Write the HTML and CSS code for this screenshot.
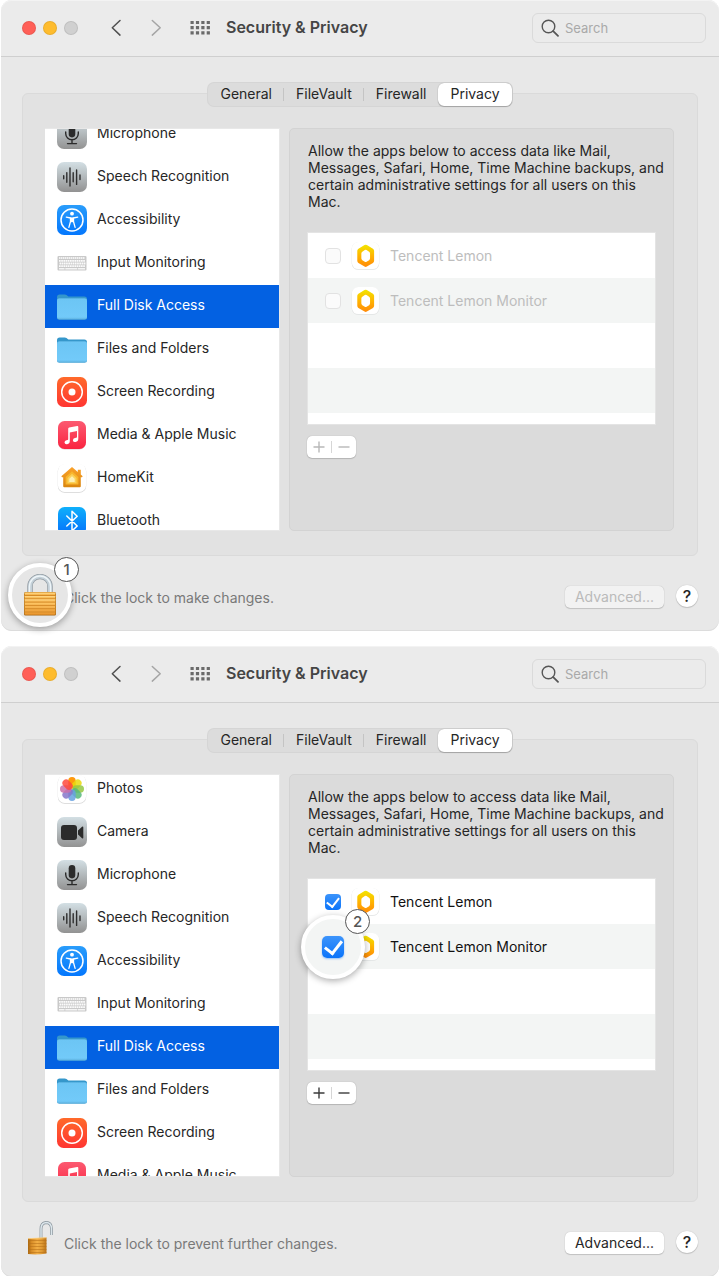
FILE: index.html
```html
<!DOCTYPE html>
<html lang="en">
<head>
<meta charset="utf-8">
<meta name="viewport" content="width=device-width, initial-scale=1">
<title>Security &amp; Privacy</title>
<link rel="stylesheet" href="styles.css">
</head>
<body>
<svg class="sprite" aria-hidden="true">
  <defs>
    <linearGradient id="g-gray" x1="0" y1="0" x2="0" y2="1"><stop offset="0" stop-color="#d3dfe4"/><stop offset="1" stop-color="#929292"/></linearGradient>
    <linearGradient id="g-blue" x1="0" y1="0" x2="0" y2="1"><stop offset="0" stop-color="#2a9dfb"/><stop offset="1" stop-color="#0477fd"/></linearGradient>
    <linearGradient id="g-bt" x1="0" y1="0" x2="0" y2="1"><stop offset="0" stop-color="#0fb0fb"/><stop offset="1" stop-color="#0570fb"/></linearGradient>
    <linearGradient id="g-red" x1="0" y1="0" x2="0" y2="1"><stop offset="0" stop-color="#ff6a2a"/><stop offset="1" stop-color="#ff3532"/></linearGradient>
    <linearGradient id="g-music" x1="0" y1="0" x2="0" y2="1"><stop offset="0" stop-color="#fc5a71"/><stop offset="1" stop-color="#fa2440"/></linearGradient>
    <linearGradient id="g-folder" x1="0" y1="0" x2="0" y2="1"><stop offset="0" stop-color="#6cc5f4"/><stop offset="0.9" stop-color="#72caf9"/><stop offset="1" stop-color="#5fb3e0"/></linearGradient>
    <linearGradient id="g-home" x1="0" y1="0" x2="0" y2="1"><stop offset="0" stop-color="#fba22a"/><stop offset="1" stop-color="#d9860f"/></linearGradient>
    <linearGradient id="g-lemon" x1="0" y1="0" x2="0" y2="1"><stop offset="0" stop-color="#f2e500"/><stop offset="0.5" stop-color="#ffb400"/><stop offset="1" stop-color="#ff8a0a"/></linearGradient>
    <linearGradient id="g-brass" x1="0" y1="0" x2="0" y2="1"><stop offset="0" stop-color="#f5b64f"/><stop offset="0.5" stop-color="#fcc260"/><stop offset="1" stop-color="#e9952d"/></linearGradient>
    <linearGradient id="g-brass-side" x1="0" y1="0" x2="1" y2="0"><stop offset="0" stop-color="#a8670f"/><stop offset="0.2" stop-color="#d98e28"/><stop offset="0.5" stop-color="#f2ae45"/><stop offset="0.75" stop-color="#e09a33"/><stop offset="1" stop-color="#b87118"/></linearGradient>
  </defs>
  <symbol id="microphone" viewBox="0 0 30 30">
    <rect width="30" height="30" rx="7" fill="url(#g-gray)"/>
    <rect x="11.7" y="5" width="6.6" height="13.4" rx="3.3" fill="#2b2b2b"/>
    <path d="M8.7 13v1.5a6.3 6.3 0 0 0 12.6 0V13M15 21v3.4M10.5 24.6h9" fill="none" stroke="#2b2b2b" stroke-width="1.4" stroke-linecap="round"/>
  </symbol>
  <symbol id="camera" viewBox="0 0 30 30">
    <rect width="30" height="30" rx="7" fill="url(#g-gray)"/>
    <rect x="4" y="8" width="16" height="15" rx="3" fill="#2b2b2b"/>
    <path d="M21 13.500 25 9.800q1.300-.8 1.300.6v10.200q0 1.400-1.300.6l-4-3.700z" fill="#2b2b2b"/>
  </symbol>
  <symbol id="speech" viewBox="0 0 30 30">
    <rect width="30" height="30" rx="7" fill="url(#g-gray)"/>
    <path d="M6.700 13.700v3M9.800 10.600v9.600M13 6v18M16.200 10.800v9M19.600 8v14.400M23 13v4.500" stroke="#2f2f2f" stroke-width="1.4" stroke-linecap="round"/>
  </symbol>
  <symbol id="accessibility" viewBox="0 0 30 30">
    <rect width="30" height="30" rx="7" fill="url(#g-blue)"/>
    <circle cx="15" cy="15" r="11" fill="none" stroke="#fff" stroke-width="1.500"/>
    <circle cx="15" cy="8.700" r="1.900" fill="#fff"/>
    <path d="M9.300 12.200 13.500 13v3.500l-1.600 5.800M20.700 12.200 16.500 13v3.500l1.600 5.800" fill="none" stroke="#fff" stroke-width="1.300" stroke-linecap="round" stroke-linejoin="round"/>
    <path d="M13.200 12.400h3.600v4.800h-3.600z" fill="#fff"/>
  </symbol>
  <symbol id="keyboard" viewBox="0 0 30 30">
    <rect x=".5" y="8" width="29" height="14.500" rx="1" fill="#c9c9c9"/>
    <path d="M2 10h26" stroke="#fff" stroke-width="1.400" stroke-dasharray="1.500 .5"/>
    <path d="M2 12.800h26M2 18.200h26" stroke="#fbfbfb" stroke-width="1.800" stroke-dasharray="1.700 .5"/>
    <path d="M2.500 15.500h26" stroke="#fbfbfb" stroke-width="1.800" stroke-dasharray="1.700 .5"/>
    <path d="M2 20.800h5.500M8.300 20.800h12M21 20.800h7" stroke="#f4f4f4" stroke-width="1.600"/>
  </symbol>
  <symbol id="folder" viewBox="0 0 30 30">
    <path d="M0 6.200Q0 3.500 2.700 3.500h5.100q1 0 1.700.6l1.200.9q.7.500 1.600.5h15q2.700 0 2.700 2.500v4H0z" fill="#3597cb"/>
    <rect x="0" y="7.200" width="30" height="21.600" rx="2.400" fill="#4ea6d6"/>
    <rect x="0" y="7.400" width="30" height="20.800" rx="2.200" fill="url(#g-folder)"/>
  </symbol>
  <symbol id="record" viewBox="0 0 30 30">
    <rect width="30" height="30" rx="6.500" fill="url(#g-red)"/>
    <circle cx="15" cy="15" r="10.300" fill="none" stroke="#fff" stroke-width="1.500"/>
    <circle cx="15" cy="15" r="3.500" fill="#fff"/>
  </symbol>
  <symbol id="music" viewBox="0 0 30 30">
    <rect x="1" y="1.800" width="28" height="27.600" rx="6.500" fill="#e0c8cc"/>
    <rect x="1" y="1" width="28" height="28" rx="6.500" fill="url(#g-music)"/>
    <path d="M11.200 8.800q0-1 .9-1.200l8.100-1.600q1.100-.2 1.100.9v11.900q0 2.700-2.700 3.200-2.400.4-2.700-1.600 0-1.800 2-2.300l1.300-.3q.8-.2.800-1v-5.700l-7.200 1.500v8.500q0 2.700-2.700 3.100-2.300.3-2.600-1.600 0-1.800 2-2.300l1.100-.3q.6-.2.600-1z" fill="#fff"/>
  </symbol>
  <symbol id="home" viewBox="0 0 30 30">
    <rect x=".8" y="1.400" width="28.400" height="28.400" rx="6.800" fill="#d4d4d4"/>
    <rect x="1" y="1" width="28" height="28" rx="6.500" fill="#fff"/>
    <path d="M15 3.900 20.800 9V6.700h3v4.900l1.600 1.500q.5 1-.5 1.100h-1.100v9q0 1-1 1h-15.600q-1 0-1-1v-9H5.100q-1-.1-.5-1.100z" fill="url(#g-home)"/>
    <path d="m15 8.200 6.400 5.800v7.500H8.600V14z" fill="#f8b52d"/>
    <path d="m15 10.700 4.500 4.200v5.300h-9v-5.300z" fill="#fad15c"/>
    <path d="m15 13.200 2.700 2.500v3.300h-5.400v-3.300z" fill="#fdf0b5"/>
  </symbol>
  <symbol id="bluetooth" viewBox="0 0 30 30">
    <rect x="1" y="1" width="28" height="28" rx="6.500" fill="url(#g-bt)"/>
    <path d="m9.800 10 10.400 10-5.200 4.900V5.300l5.200 4.900L9.800 20" fill="none" stroke="#fff" stroke-width="1.500" stroke-linejoin="round" stroke-linecap="round"/>
  </symbol>
  <symbol id="photos" viewBox="0 0 30 30">
    <rect x=".8" y="1.400" width="28.400" height="28.400" rx="6.800" fill="#d4d4d4"/>
    <rect x="1" y="1" width="28" height="28" rx="6.500" fill="#fff"/>
    <g opacity=".95">
      <rect x="11.300" y="3" width="7.400" height="11.500" rx="3.700" fill="#ff9500"/>
      <rect x="11.300" y="3" width="7.400" height="11.500" rx="3.700" fill="#e8d800" fill-opacity=".85" transform="rotate(45 15 15)"/>
      <rect x="11.300" y="3" width="7.400" height="11.500" rx="3.700" fill="#8fc63a" fill-opacity=".85" transform="rotate(90 15 15)"/>
      <rect x="11.300" y="3" width="7.400" height="11.500" rx="3.700" fill="#4fb573" fill-opacity=".85" transform="rotate(135 15 15)"/>
      <rect x="11.300" y="3" width="7.400" height="11.500" rx="3.700" fill="#5e9ce0" fill-opacity=".85" transform="rotate(180 15 15)"/>
      <rect x="11.300" y="3" width="7.400" height="11.500" rx="3.700" fill="#8070c8" fill-opacity=".85" transform="rotate(225 15 15)"/>
      <rect x="11.300" y="3" width="7.400" height="11.500" rx="3.700" fill="#c868a6" fill-opacity=".85" transform="rotate(270 15 15)"/>
      <rect x="11.300" y="3" width="7.400" height="11.500" rx="3.700" fill="#ff4033" fill-opacity=".85" transform="rotate(315 15 15)"/>
    </g>
  </symbol>
  <symbol id="lemon" viewBox="0 0 30 30">
    <rect x=".7" y="1.200" width="28.600" height="28.600" rx="6.800" fill="#e0e2e2"/>
    <rect x="1" y="1" width="28" height="28" rx="6.500" fill="#fff"/>
    <path fill-rule="evenodd" d="M14 4.200q1.200-.8 2.400 0l6.300 3.800q1.200.8 1.200 2.200v10.300q0 1.400-1.200 2.200l-6.300 3.800q-1.200.8-2.400 0L7.700 22.700q-1.200-.8-1.200-2.200V10.200Q6.500 8.800 7.700 8zM14.300 9.300l-2.600 1.700q-1 .7-1 1.900v5q0 1.200 1 1.900l2.600 1.700q.9.600 1.800 0l2.600-1.700q1-.7 1-1.900v-5q0-1.200-1-1.900l-2.600-1.700q-.9-.6-1.800 0z" fill="url(#g-lemon)"/>
  </symbol>
  <symbol id="lock" viewBox="0 0 34 42">
    <path d="M7 19V12.500a10 10 0 0 1 20 0V19" fill="none" stroke="#8f989f" stroke-width="5.400"/>
    <path d="M7 19V12.500a10 10 0 0 1 20 0V19" fill="none" stroke="#c4d0d8" stroke-width="4"/>
    <path d="M6.500 19V12.500a10.500 10.500 0 0 1 21 0V19" fill="none" stroke="#eef5f8" stroke-width="1.400"/>
    <rect x="1" y="18" width="32" height="23.500" rx="1.500" fill="#a5650f"/>
    <rect x="1.600" y="18.300" width="30.800" height="22.400" rx="1.200" fill="url(#g-brass)"/>
    <path d="M1.600 21.500h30.800M1.600 24.800h30.800M1.600 28.100h30.800M1.600 31.400h30.800M1.600 34.700h30.800M1.600 38h30.800" stroke="#d58a28" stroke-width="1"/>
    <path d="M1.600 19.300h30.800M1.600 22.600h30.800M1.600 25.900h30.800" stroke="#ffdc91" stroke-width=".8"/>
  </symbol>
  <symbol id="unlock" viewBox="0 0 26 34">
    <path d="M14 17V8q0-6 5-6.500 5.500 0 5.500 6.500v6" fill="none" stroke="#87929a" stroke-width="2.800"/>
    <path d="M14 17V8q0-6 5-6.500 5.500 0 5.500 6.500v6" fill="none" stroke="#dce6eb" stroke-width="1.500"/>
    <path d="M1 17.500 19.500 16.500v16q-9.500 1.500-18.500.5z" fill="url(#g-brass-side)"/>
    <path d="M1 19.500h18.500M1 22.500h18.500M1 25.500h18.500M1 28.500h18.500M1 31.500h18.500" stroke="#b87119" stroke-width=".8" opacity=".7"/>
    <path d="M1 17.700 19.500 16.700" stroke="#ffd384" stroke-width=".8"/>
  </symbol>
  <symbol id="back" viewBox="0 0 20 20"><path d="M14 2.500 6.300 9.800 14 17.100" fill="none" stroke="currentColor" stroke-width="1.500" stroke-linecap="round" stroke-linejoin="round"/></symbol>
  <symbol id="forward" viewBox="0 0 20 20"><path d="m6.300 2.500 7.900 7.300-7.900 7.300" fill="none" stroke="currentColor" stroke-width="1.500" stroke-linecap="round" stroke-linejoin="round"/></symbol>
  <symbol id="dots" viewBox="0 0 20 20"><path d="M.5 4.500h19.500M.5 9.700h19.500M.5 14.900h19.500" stroke="currentColor" stroke-width="3.200" stroke-dasharray="3.200 2.200"/></symbol>
  <symbol id="magnifier" viewBox="0 0 18 18"><circle cx="7.500" cy="7.500" r="6.300" fill="none" stroke="currentColor" stroke-width="1.400"/><path d="m12.200 12.200 4.800 4.600" stroke="currentColor" stroke-width="1.800" stroke-linecap="round"/></symbol>
  <symbol id="plus" viewBox="0 0 12 12"><path d="M6 .5v11M.5 6h11" stroke="currentColor" stroke-width="1.400"/></symbol>
  <symbol id="minus" viewBox="0 0 12 12"><path d="M.5 6h11" stroke="currentColor" stroke-width="1.400"/></symbol>
</svg>

<main class="stack">
  <section class="window" aria-label="Security and Privacy, locked">
    <header class="titlebar">
      <div class="lights"><button class="light close" aria-label="Close"></button><button class="light minimize" aria-label="Minimize"></button><button class="light zoom" aria-label="Zoom" disabled></button></div>
      <nav class="history">
        <button class="nav-button" aria-label="Back"><svg><use href="#back"/></svg></button>
        <button class="nav-button" aria-label="Forward" disabled><svg><use href="#forward"/></svg></button>
      </nav>
      <button class="nav-button show-all" aria-label="Show all"><svg><use href="#dots"/></svg></button>
      <h1 class="title">Security &amp; Privacy</h1>
      <label class="search"><svg><use href="#magnifier"/></svg><input type="search" placeholder="Search" aria-label="Search"></label>
    </header>
    <div class="content">
      <div class="tabs" role="tablist">
        <button class="tab" role="tab">General</button><button class="tab" role="tab">FileVault</button><button class="tab" role="tab">Firewall</button><button class="tab active" role="tab" aria-selected="true">Privacy</button>
      </div>
      <div class="panel">
        <div class="sidebar">
          <ul class="services from-microphone">
            <li class="service"><svg><use href="#microphone"/></svg><span>Microphone</span></li>
            <li class="service"><svg><use href="#speech"/></svg><span>Speech Recognition</span></li>
            <li class="service"><svg><use href="#accessibility"/></svg><span>Accessibility</span></li>
            <li class="service"><svg><use href="#keyboard"/></svg><span>Input Monitoring</span></li>
            <li class="service selected"><svg><use href="#folder"/></svg><span>Full Disk Access</span></li>
            <li class="service"><svg><use href="#folder"/></svg><span>Files and Folders</span></li>
            <li class="service"><svg><use href="#record"/></svg><span>Screen Recording</span></li>
            <li class="service"><svg><use href="#music"/></svg><span>Media &amp; Apple Music</span></li>
            <li class="service"><svg><use href="#home"/></svg><span>HomeKit</span></li>
            <li class="service"><svg><use href="#bluetooth"/></svg><span>Bluetooth</span></li>
          </ul>
        </div>
        <div class="detail">
          <p class="explain">Allow the apps below to access data like Mail,<br>Messages, Safari, Home, Time Machine backups, and<br>certain administrative settings for all users on this<br>Mac.</p>
          <div class="apps">
            <label class="app disabled"><span class="slot"><input class="check" type="checkbox" disabled></span><svg><use href="#lemon"/></svg><span>Tencent Lemon</span></label>
            <label class="app disabled"><span class="slot"><input class="check" type="checkbox" disabled></span><svg><use href="#lemon"/></svg><span>Tencent Lemon Monitor</span></label>
          </div>
          <div class="edit"><button aria-label="Add" disabled><svg><use href="#plus"/></svg></button><button aria-label="Remove" disabled><svg><use href="#minus"/></svg></button></div>
        </div>
      </div>
      <footer class="footer">
        <div class="lock-slot">
          <div class="callout">
            <button class="lock large" aria-label="Unlock"><svg><use href="#lock"/></svg></button>
            <span class="step">1</span>
          </div>
        </div>
        <span class="hint">Click the lock to make changes.</span>
        <button class="advanced" disabled>Advanced...</button>
        <button class="help" aria-label="Help">?</button>
      </footer>
    </div>
  </section>

  <section class="window" aria-label="Security and Privacy, unlocked">
    <header class="titlebar">
      <div class="lights"><button class="light close" aria-label="Close"></button><button class="light minimize" aria-label="Minimize"></button><button class="light zoom" aria-label="Zoom" disabled></button></div>
      <nav class="history">
        <button class="nav-button" aria-label="Back"><svg><use href="#back"/></svg></button>
        <button class="nav-button" aria-label="Forward" disabled><svg><use href="#forward"/></svg></button>
      </nav>
      <button class="nav-button show-all" aria-label="Show all"><svg><use href="#dots"/></svg></button>
      <h1 class="title">Security &amp; Privacy</h1>
      <label class="search"><svg><use href="#magnifier"/></svg><input type="search" placeholder="Search" aria-label="Search"></label>
    </header>
    <div class="content">
      <div class="tabs" role="tablist">
        <button class="tab" role="tab">General</button><button class="tab" role="tab">FileVault</button><button class="tab" role="tab">Firewall</button><button class="tab active" role="tab" aria-selected="true">Privacy</button>
      </div>
      <div class="panel">
        <div class="sidebar">
          <ul class="services from-photos">
            <li class="service"><svg><use href="#photos"/></svg><span>Photos</span></li>
            <li class="service"><svg><use href="#camera"/></svg><span>Camera</span></li>
            <li class="service"><svg><use href="#microphone"/></svg><span>Microphone</span></li>
            <li class="service"><svg><use href="#speech"/></svg><span>Speech Recognition</span></li>
            <li class="service"><svg><use href="#accessibility"/></svg><span>Accessibility</span></li>
            <li class="service"><svg><use href="#keyboard"/></svg><span>Input Monitoring</span></li>
            <li class="service selected"><svg><use href="#folder"/></svg><span>Full Disk Access</span></li>
            <li class="service"><svg><use href="#folder"/></svg><span>Files and Folders</span></li>
            <li class="service"><svg><use href="#record"/></svg><span>Screen Recording</span></li>
            <li class="service"><svg><use href="#music"/></svg><span>Media &amp; Apple Music</span></li>
          </ul>
        </div>
        <div class="detail">
          <p class="explain">Allow the apps below to access data like Mail,<br>Messages, Safari, Home, Time Machine backups, and<br>certain administrative settings for all users on this<br>Mac.</p>
          <div class="apps">
            <label class="app"><span class="slot"><input class="check" type="checkbox" checked></span><svg><use href="#lemon"/></svg><span>Tencent Lemon</span></label>
            <label class="app"><span class="slot"><span class="callout on-list"><input class="check large" type="checkbox" checked><span class="step">2</span></span></span><svg><use href="#lemon"/></svg><span>Tencent Lemon Monitor</span></label>
          </div>
          <div class="edit"><button aria-label="Add"><svg><use href="#plus"/></svg></button><button aria-label="Remove"><svg><use href="#minus"/></svg></button></div>
        </div>
      </div>
      <footer class="footer">
        <div class="lock-slot"><button class="lock" aria-label="Lock"><svg><use href="#unlock"/></svg></button></div>
        <span class="hint">Click the lock to prevent further changes.</span>
        <button class="advanced">Advanced...</button>
        <button class="help" aria-label="Help">?</button>
      </footer>
    </div>
  </section>
</main>
</body>
</html>
```
FILE: styles.css
```css
* {
  box-sizing: border-box;
}

body {
  margin: 0;
  background: #fff;
  color: #262626;
  font-family: Inter, "Liberation Sans", sans-serif;
  font-size: 14px;
  line-height: 17px;
}

button,
input {
  margin: 0;
  padding: 0;
  border: 0;
  background: none;
  color: inherit;
  font: inherit;
}

svg {
  display: block;
  flex: none;
}

.sprite {
  position: absolute;
  width: 0;
  height: 0;
}

.stack {
  display: flex;
  flex-direction: column;
  gap: 15px;
  padding: 0 1px;
}

.window {
  padding-bottom: 22px;
  border-radius: 11px;
  background: #e8e8e8;
  box-shadow: inset 0 1px #f3f3f3, inset 0 -1px #dcdcdc;
}

.titlebar {
  display: flex;
  align-items: center;
  height: 57px;
  padding: 0 13px 0 21px;
  border-bottom: 1px solid #cfcfcf;
  border-radius: 11px 11px 0 0;
  background: #ebebeb;
  box-shadow: inset 0 1px #f3f3f3;
}

.lights {
  display: flex;
  gap: 7px;
}

.light {
  width: 14px;
  height: 14px;
  border: 1px solid #00000014;
  border-radius: 50%;
}

.close {
  background: #ff5f57;
}

.minimize {
  background: #febc2e;
}

.zoom {
  background: #d0d0d0;
}

.history {
  display: flex;
  gap: 20px;
  margin-left: 28px;
}

.nav-button {
  color: #4f4f4f;
}

.nav-button:disabled {
  color: #a5a5a5;
}

.nav-button svg {
  width: 20px;
  height: 20px;
}

.show-all {
  margin-left: 24px;
  color: #6a6a6a;
}

.title {
  margin: 0 auto 0 16px;
  padding-bottom: 2px;
  color: #454545;
  font-size: 16px;
  font-weight: 600;
  line-height: 20px;
}

.search {
  display: flex;
  align-items: center;
  gap: 6px;
  width: 174px;
  height: 30px;
  padding: 0 8px;
  border: 1px solid #dadada;
  border-radius: 6px;
  color: #565656;
}

.search svg {
  width: 18px;
  height: 18px;
}

.search input {
  width: 100%;
  min-width: 0;
  outline: none;
  font-size: 13px;
}

.search input::placeholder {
  color: #a9a9a9;
  opacity: 1;
}

.content {
  padding: 26px 21px 0;
}

.tabs {
  position: relative;
  display: flex;
  width: fit-content;
  height: 23px;
  margin: 0 auto -13px;
  border-radius: 6px;
  background: #dcdcdc;
  box-shadow: 0 0 0 1px #d5d5d5;
}

.tab {
  position: relative;
  padding: 0 12px 2px;
}

.tab:nth-child(-n + 2)::after {
  position: absolute;
  top: 5px;
  right: 0;
  width: 1px;
  height: 13px;
  background: #c4c4c4;
  content: "";
}

.active {
  border-radius: 6px;
  background: #fff;
  box-shadow: 0 0 1px #00000059, 0 1px 1px #00000033;
}

.panel {
  display: grid;
  grid-template-columns: 235px minmax(0, 1fr);
  gap: 9px;
  padding: 34px 23px 24px 22px;
  border: 1px solid #dadada;
  border-radius: 6px;
  background: #e2e2e2;
}

.sidebar {
  height: 403px;
  overflow: hidden;
  border: 1px solid #e8e8e8;
  border-left: 0;
  background: #fff;
}

.services {
  margin: 0;
  padding: 0;
  list-style: none;
}

.from-microphone {
  margin-top: -16px;
}

.from-photos {
  margin-top: -7px;
}

.service {
  display: flex;
  align-items: center;
  gap: 10px;
  height: 43px;
  padding: 0 0 2px 12px;
}

.service svg {
  width: 30px;
  height: 30px;
}

.service span {
  padding-bottom: 2px;
}

.selected {
  background: #0361e2;
  color: #fff;
}

.detail {
  padding: 13px 17px 0;
  border: 1px solid #d3d3d3;
  border-radius: 5px;
  background: #dbdbdb;
}

.explain {
  margin: 0 0 22px;
  padding-left: 1px;
  white-space: nowrap;
}

.apps {
  height: 193px;
  border: 1px solid #e4e4e4;
  background: repeating-linear-gradient(#fff 0 45px, #f3f5f4 45px 90px);
  color: #111;
}

.app {
  display: flex;
  align-items: center;
  gap: 10px;
  height: 45px;
  padding-left: 17px;
}

.app svg {
  width: 29px;
  height: 29px;
}

.disabled {
  color: #bdbdbd;
}

.slot {
  position: relative;
  display: flex;
  width: 16px;
  height: 16px;
}

.check {
  display: grid;
  place-items: center;
  width: 16px;
  height: 16px;
  border: 1px solid #e2e2e2;
  border-radius: 4px;
  background: #fbfbfb;
  appearance: none;
}

.check:checked {
  border: 0;
  background: linear-gradient(#3c94fb, #0b74fa);
}

.check:checked::after {
  width: 6px;
  height: 10px;
  margin-top: -2px;
  border: solid #fff;
  border-width: 0 2px 2px 0;
  content: "";
  rotate: 38deg;
}

.check.large {
  width: 22px;
  height: 22px;
  border-radius: 5px;
  box-shadow: 0 1px 2px #0b74fa66;
}

.check.large:checked::after {
  width: 8px;
  height: 14px;
  border-width: 0 3px 3px 0;
}

.edit {
  display: flex;
  align-items: center;
  width: fit-content;
  height: 22px;
  margin-top: 11px;
  border-radius: 5px;
  background: #fff;
  box-shadow: 0 0 1px #0000004d, 0 1px 1px #00000026;
  color: #3b3b3b;
}

.edit button {
  padding: 0 6px;
}

.edit button:disabled {
  color: #b8b8b8;
}

.edit button + button {
  border-left: 1px solid #d6d6d6;
}

.edit svg {
  width: 12px;
  height: 12px;
}

.footer {
  display: flex;
  align-items: center;
  padding: 18px 0 0 5px;
}

.lock-slot {
  position: relative;
  width: 26px;
  height: 34px;
  margin-top: 1px;
}

.lock svg {
  width: 26px;
  height: 34px;
}

.lock.large svg {
  width: 34px;
  height: 42px;
}

.hint {
  margin-left: 11px;
  padding-top: 11px;
  color: #797979;
}

.advanced {
  height: 22px;
  margin: 11px 0 0 auto;
  padding: 0 10px 1px;
  border-radius: 5px;
  background: #fff;
  box-shadow: 0 0 1px #00000040, 0 1px 1px #00000026;
}

.advanced:disabled {
  background: #f2f2f2;
  color: #bababa;
}

.help {
  width: 22px;
  height: 22px;
  margin: 9px 0 0 12px;
  border-radius: 50%;
  background: #fff;
  box-shadow: 0 0 1px #00000040, 0 1px 1px #00000026;
  font-size: 16px;
  font-weight: 500;
}

.callout {
  position: absolute;
  z-index: 1;
  top: 20px;
  left: 50%;
  display: grid;
  place-items: center;
  width: 64px;
  height: 64px;
  border: 4px solid #fff;
  border-radius: 50%;
  background: #e6e6e6;
  box-shadow: 0 2px 7px #00000055;
  translate: -50% -50%;
}

.on-list {
  top: 50%;
  background: #f3f5f4;
}

.step {
  position: absolute;
  top: -10px;
  right: -11px;
  display: grid;
  place-items: center;
  width: 25px;
  height: 25px;
  border: 1px solid #555;
  border-radius: 50%;
  background: #fff;
  color: #555;
  font-size: 15px;
  font-weight: 500;
}

.on-list .step {
  right: -9px;
}
```
